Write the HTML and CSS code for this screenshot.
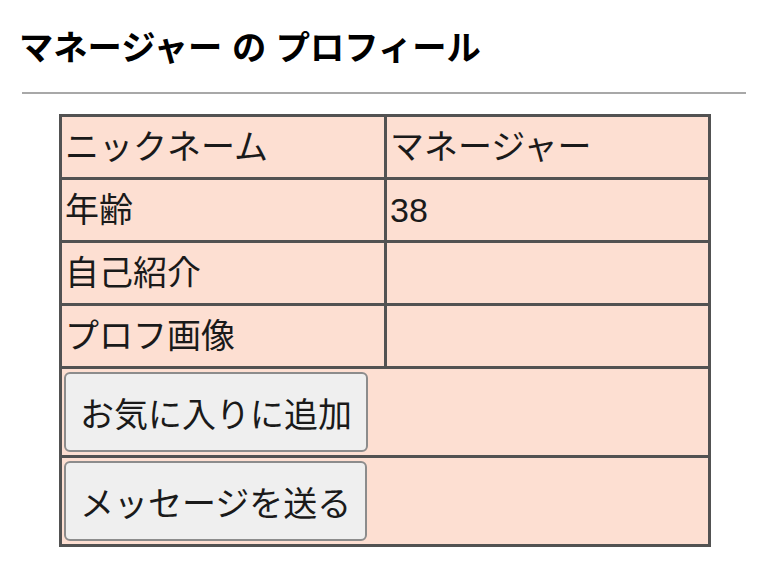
FILE: index.html
```html
<!DOCTYPE html>
<html lang="ja">
<head>
<meta charset="utf-8">
<link rel="stylesheet" href="styles.css">
</head>
<body>
<div class="page">
  <h1 class="title">マネージャー の プロフィール</h1>
  <hr class="rule">
  <table class="profile">
    <tr><td class="label">ニックネーム</td><td class="value">マネージャー</td></tr>
    <tr><td class="label">年齢</td><td class="value">38</td></tr>
    <tr><td class="label">自己紹介</td><td class="value"></td></tr>
    <tr><td class="label">プロフ画像</td><td class="value"></td></tr>
    <tr><td class="action" colspan="2"><button class="btn" type="button">お気に入りに追加</button></td></tr>
    <tr><td class="action" colspan="2"><button class="btn" type="button">メッセージを送る</button></td></tr>
  </table>
</div>
</body>
</html>
```
FILE: styles.css
```css
html, body {
  margin: 0;
  padding: 0;
  background: #ffffff;
}
.page {
  padding: 23px 23px 0 19px;
  font-family: "Liberation Sans", "Noto Sans CJK JP", sans-serif;
  color: #1a1a1a;
}
.title {
  margin: 0;
  font-size: 34.3px;
  line-height: 50px;
  font-weight: bold;
  color: #000;
}
.rule {
  margin: 19px 0 0 3px;
  border: 0;
  height: 2px;
  background: #a8a8a8;
}
.profile {
  margin: 20px 0 0 40px;
  width: 652px;
  border-collapse: collapse;
  border: 3px solid #525252;
  background: #fddfd2;
}
.profile td {
  border: 3px solid #525252;
  padding: 0 3px;
  height: 60px;
  font-size: 34px;
  line-height: 48px;
  vertical-align: middle;
}
.profile td.label {
  width: 316px;
}
.profile td.action {
  padding: 3px 2px;
  height: auto;
}
.btn {
  display: block;
  height: 80px;
  padding: 0 14px;
  font-family: "Liberation Sans", "Noto Sans CJK JP", sans-serif;
  font-size: 34px;
  color: #1a1a1a;
  background: #efefef;
  border: 2px solid #8c8c8c;
  border-radius: 6px;
}
```
